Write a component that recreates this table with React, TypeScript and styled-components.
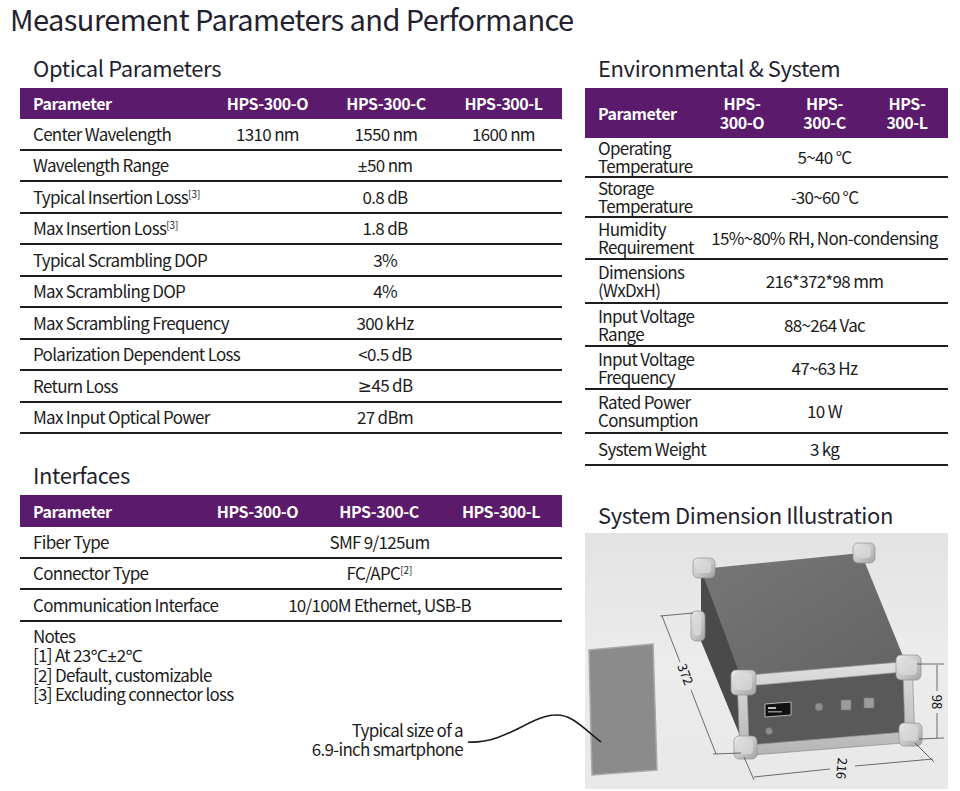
import React from 'react';
import { createGlobalStyle, styled } from 'styled-components';

const FONT = `"Noto Sans CJK SC", "Noto Sans", sans-serif`;

const GlobalStyle = createGlobalStyle`
  body {
    margin: 0;
    background: #ffffff;
    font-family: ${FONT};
    color: #1c1c1c;
  }
`;

const Sup = styled.sup`
  font-size: 10px;
  line-height: 0;
  letter-spacing: 0;
  vertical-align: 6px;
`;

// Latin-width glyphs for symbols the CJK font draws full-width
const Sym = styled.span`
  font-family: "Noto Sans", "DejaVu Sans", sans-serif;
  letter-spacing: -0.3px;
`;

type Row = { label: string; sup?: string; values: React.ReactNode[]; h?: number };

const optical: Row[] = [
  { label: 'Center Wavelength', values: ['1310 nm', '1550 nm', '1600 nm'] },
  {
    label: 'Wavelength Range',
    values: [
      <>
        <Sym>±</Sym>50 nm
      </>,
    ],
  },
  { label: 'Typical Insertion Loss', sup: '[3]', values: ['0.8 dB'] },
  { label: 'Max Insertion Loss', sup: '[3]', values: ['1.8 dB'] },
  { label: 'Typical Scrambling DOP', values: ['3%'] },
  { label: 'Max Scrambling DOP', values: ['4%'] },
  { label: 'Max Scrambling Frequency', values: ['300 kHz'] },
  { label: 'Polarization Dependent Loss', values: ['<0.5 dB'] },
  {
    label: 'Return Loss',
    values: [
      <>
        <Sym>≥</Sym>45 dB
      </>,
    ],
  },
  { label: 'Max Input Optical Power', values: ['27 dBm'] },
];

const interfaces: Row[] = [
  { label: 'Fiber Type', values: ['SMF 9/125um'] },
  {
    label: 'Connector Type',
    values: [
      <>
        FC/APC<Sup>[2]</Sup>
      </>,
    ],
  },
  { label: 'Communication Interface', values: ['10/100M Ethernet, USB-B'] },
];

const environment: Row[] = [
  { label: 'Operating\nTemperature', values: ['5~40 °C'], h: 40 },
  { label: 'Storage\nTemperature', values: ['-30~60 °C'], h: 40 },
  { label: 'Humidity\nRequirement', values: ['15%~80% RH, Non-condensing'], h: 42 },
  { label: 'Dimensions\n(WxDxH)', values: ['216*372*98 mm'], h: 44 },
  { label: 'Input Voltage\nRange', values: ['88~264 Vac'], h: 43 },
  { label: 'Input Voltage\nFrequency', values: ['47~63 Hz'], h: 43 },
  { label: 'Rated Power\nConsumption', values: ['10 W'], h: 44 },
  { label: 'System Weight', values: ['3 kg'], h: 32 },
];

const models = ['HPS-300-O', 'HPS-300-C', 'HPS-300-L'];

function SpecTable(props: {
  cols: string;
  rows: Row[];
  headerHeight: number;
  rowHeight?: number;
  splitHeader?: boolean;
}) {
  return (
    <S.Table>
      <S.HeaderRow $cols={props.cols} $h={props.headerHeight}>
        <S.HeadCell $first>Parameter</S.HeadCell>
        {models.map((m) => (
          <S.HeadCell key={m}>
            {props.splitHeader ? (
              <>
                HPS-
                <br />
                {m.slice(4)}
              </>
            ) : (
              m
            )}
          </S.HeadCell>
        ))}
      </S.HeaderRow>
      {props.rows.map((r) => (
        <S.BodyRow key={r.label} $cols={props.cols} $h={r.h ?? props.rowHeight ?? 31.5}>
          <S.LabelCell>
            {r.label}
            {r.sup && <Sup>{r.sup}</Sup>}
          </S.LabelCell>
          {r.values.map((v, i) => (
            <S.ValueCell key={i} $span={r.values.length === 1}>
              {v}
            </S.ValueCell>
          ))}
        </S.BodyRow>
      ))}
    </S.Table>
  );
}

function Cap(props: { x: number; y: number; w: number; h: number }) {
  return (
    <g>
      <rect x={props.x} y={props.y} width={props.w} height={props.h} rx="5" fill="url(#cap)" stroke="#8f8f8f" strokeWidth="0.7" />
      <rect x={props.x + 3} y={props.y + 3} width={props.w - 7} height={props.h - 8} rx="4" fill="#dcdcdc" opacity="0.7" />
    </g>
  );
}

function DeviceDrawing() {
  return (
    <svg width="363" height="256" viewBox="0 0 363 256">
      <defs>
        <linearGradient id="bg" x1="0" y1="0" x2="0" y2="1">
          <stop offset="0" stopColor="#e3e3e3" />
          <stop offset="0.5" stopColor="#ececec" />
          <stop offset="1" stopColor="#e8e8e8" />
        </linearGradient>
        <linearGradient id="top" x1="0" y1="0" x2="1" y2="1">
          <stop offset="0" stopColor="#777777" />
          <stop offset="1" stopColor="#636363" />
        </linearGradient>
        <linearGradient id="cap" x1="0" y1="0" x2="1" y2="1">
          <stop offset="0" stopColor="#ececec" />
          <stop offset="1" stopColor="#a4a4a4" />
        </linearGradient>
        <linearGradient id="frame" x1="0" y1="0" x2="0" y2="1">
          <stop offset="0" stopColor="#e0e0e0" />
          <stop offset="1" stopColor="#b4b4b4" />
        </linearGradient>
      </defs>
      <rect width="363" height="256" fill="url(#bg)" />

      {/* phone */}
      <polygon points="4,117 68,111 72,237 7,242" fill="#8b8b8b" stroke="#a8a8a8" strokeWidth="1.5" />

      {/* device body */}
      <polygon points="116,36 160,150 160,215 116,108" fill="#4a4a4a" />
      <polygon points="116,36 276,20 322,133 158,150" fill="url(#top)" />
      {/* front frame */}
      <polygon points="152,143 327,128 330,209 155,223" fill="url(#frame)" stroke="#8c8c8c" strokeWidth="0.7" />
      <polygon points="162,153 318,139 320,199 164,212" fill="#595959" stroke="#9a9a9a" strokeWidth="0.7" />

      {/* corner caps */}
      <Cap x={108} y={25} w={22} height={0} h={20} />
      <Cap x={268} y={10} w={22} h={20} />
      <Cap x={106} y={78} w={14} h={30} />
      <Cap x={146} y={137} w={25} h={25} />
      <Cap x={311} y={122} w={25} h={25} />
      <Cap x={149} y={203} w={23} h={23} />
      <Cap x={314} y={190} w={23} h={23} />

      {/* front panel controls */}
      <polygon points="180,171 206,169 206,182 180,184" fill="#121212" stroke="#d4d4d4" strokeWidth="0.8" />
      <rect x="183" y="174" width="8" height="2" fill="#bdbdbd" />
      <rect x="183" y="178" width="14" height="1.5" fill="#8a8a8a" />
      <circle cx="234" cy="174" r="4" fill="#8e8e8e" stroke="#6a6a6a" strokeWidth="0.6" />
      <rect x="256" y="167" width="10" height="10" fill="#9c9c9c" stroke="#777" strokeWidth="0.6" />
      <rect x="279" y="165" width="10" height="10" fill="#9c9c9c" stroke="#777" strokeWidth="0.6" />
      <circle cx="184" cy="198" r="3.5" fill="#8e8e8e" stroke="#6a6a6a" strokeWidth="0.6" />

      {/* dimension lines */}
      <g stroke="#333" strokeWidth="0.7" fill="none">
        <line x1="77" y1="83" x2="95" y2="129" />
        <line x1="106" y1="157" x2="131" y2="221" />
        <line x1="75" y1="83" x2="108" y2="80" />
        <line x1="128" y1="221" x2="156" y2="220" />
        <line x1="169" y1="244" x2="245" y2="236" />
        <line x1="270" y1="233" x2="348" y2="226" />
        <line x1="159" y1="224" x2="169" y2="247" />
        <line x1="330" y1="210" x2="349" y2="229" />
        <line x1="352" y1="132" x2="352" y2="158" />
        <line x1="352" y1="180" x2="352" y2="205" />
        <line x1="332" y1="131" x2="359" y2="131" />
        <line x1="334" y1="206" x2="359" y2="205" />
      </g>
      <g fill="#111" fontFamily={FONT} fontSize="13">
        <text x="96" y="143" textAnchor="middle" transform="rotate(69 96 143)">
          372
        </text>
        <text x="252" y="235" textAnchor="middle" transform="rotate(95 252 235)">
          216
        </text>
        <text x="347" y="169" textAnchor="middle" transform="rotate(90 347 169)">
          98
        </text>
      </g>
    </svg>
  );
}

export default function App() {
  return (
    <>
      <GlobalStyle />
      <S.Page>
        <S.PageTitle>Measurement Parameters and Performance</S.PageTitle>
        <S.Columns>
          <S.Column>
            <S.SectionTitle>Optical Parameters</S.SectionTitle>
            <SpecTable cols="188px 119px 118px 117px" rows={optical} headerHeight={31} />
            <S.SectionTitle $gap={26}>Interfaces</S.SectionTitle>
            <SpecTable cols="177px 121px 122px 122px" rows={interfaces} headerHeight={32} />
            <S.Notes>
              Notes
              <br />
              [1] At 23<Sym>℃±</Sym>2<Sym>℃</Sym>
              <br />
              [2] Default, customizable
              <br />
              [3] Excluding connector loss
            </S.Notes>
          </S.Column>
          <S.Column>
            <S.SectionTitle>Environmental &amp; System</S.SectionTitle>
            <SpecTable
              cols="116px 82px 83px 82px"
              rows={environment}
              headerHeight={50}
              splitHeader
            />
            <S.SectionTitle $gap={34}>System Dimension Illustration</S.SectionTitle>
            <S.Illustration>
              <DeviceDrawing />
            </S.Illustration>
          </S.Column>
        </S.Columns>

        <S.Caption>
          Typical size of a
          <br />
          6.9-inch smartphone
        </S.Caption>
        <S.Pointer width="140" height="50" viewBox="0 0 140 50">
          <path d="M3,42 C40,44 65,16 90,15 C106,14 116,26 136,42" fill="none" stroke="#1c1c1c" strokeWidth="1.6" />
        </S.Pointer>
      </S.Page>
    </>
  );
}

const S = {
  Page: styled.div`
    position: relative;
    width: 960px;
    height: 791px;
    overflow: hidden;
  `,
  PageTitle: styled.h1`
    margin: 0;
    padding-left: 10px;
    font-size: 29px;
    line-height: 36px;
    font-weight: 400;
    letter-spacing: -0.55px;
    color: #241f30;
  `,
  Columns: styled.div`
    display: grid;
    grid-template-columns: 542px 363px;
    column-gap: 23px;
    padding-left: 20px;
  `,
  Column: styled.div`
    display: flex;
    flex-direction: column;
  `,
  SectionTitle: styled.h2<{ $gap?: number }>`
    margin: ${(p) => p.$gap ?? 17}px 0 7px;
    padding-left: 13px;
    font-size: 22px;
    line-height: 28px;
    font-weight: 400;
    letter-spacing: -0.4px;
    color: #241f30;
  `,
  Table: styled.div`
    display: flex;
    flex-direction: column;
  `,
  HeaderRow: styled.div<{ $cols: string; $h: number }>`
    display: grid;
    grid-template-columns: ${(p) => p.$cols};
    align-items: center;
    height: ${(p) => p.$h}px;
    background: #5b1a6b;
    color: #ffffff;
  `,
  HeadCell: styled.div<{ $first?: boolean }>`
    padding-left: ${(p) => (p.$first ? 13 : 0)}px;
    text-align: ${(p) => (p.$first ? 'left' : 'center')};
    font-size: 16px;
    line-height: 19px;
    font-weight: 700;
    letter-spacing: -0.45px;
  `,
  BodyRow: styled.div<{ $cols: string; $h: number }>`
    display: grid;
    grid-template-columns: ${(p) => p.$cols};
    align-items: center;
    box-sizing: border-box;
    height: ${(p) => p.$h}px;
    border-bottom: 2px solid #1e1e1e;
    font-size: 17px;
    letter-spacing: -0.7px;
  `,
  LabelCell: styled.div`
    padding-left: 13px;
    white-space: pre;
    line-height: 18px;
  `,
  ValueCell: styled.div<{ $span?: boolean }>`
    grid-column: ${(p) => (p.$span ? '2 / -1' : 'auto')};
    text-align: center;
    white-space: nowrap;
    line-height: 20px;
  `,
  Notes: styled.div`
    margin-top: 4px;
    padding-left: 13px;
    font-size: 17px;
    line-height: 19px;
    letter-spacing: -0.7px;
  `,
  Illustration: styled.div`
    height: 256px;
    margin-top: -2px;
  `,
  Caption: styled.div`
    position: absolute;
    right: 497px;
    top: 720px;
    text-align: right;
    font-size: 17px;
    line-height: 19px;
    letter-spacing: -0.7px;
  `,
  Pointer: styled.svg`
    position: absolute;
    left: 465px;
    top: 700px;
  `,
};
